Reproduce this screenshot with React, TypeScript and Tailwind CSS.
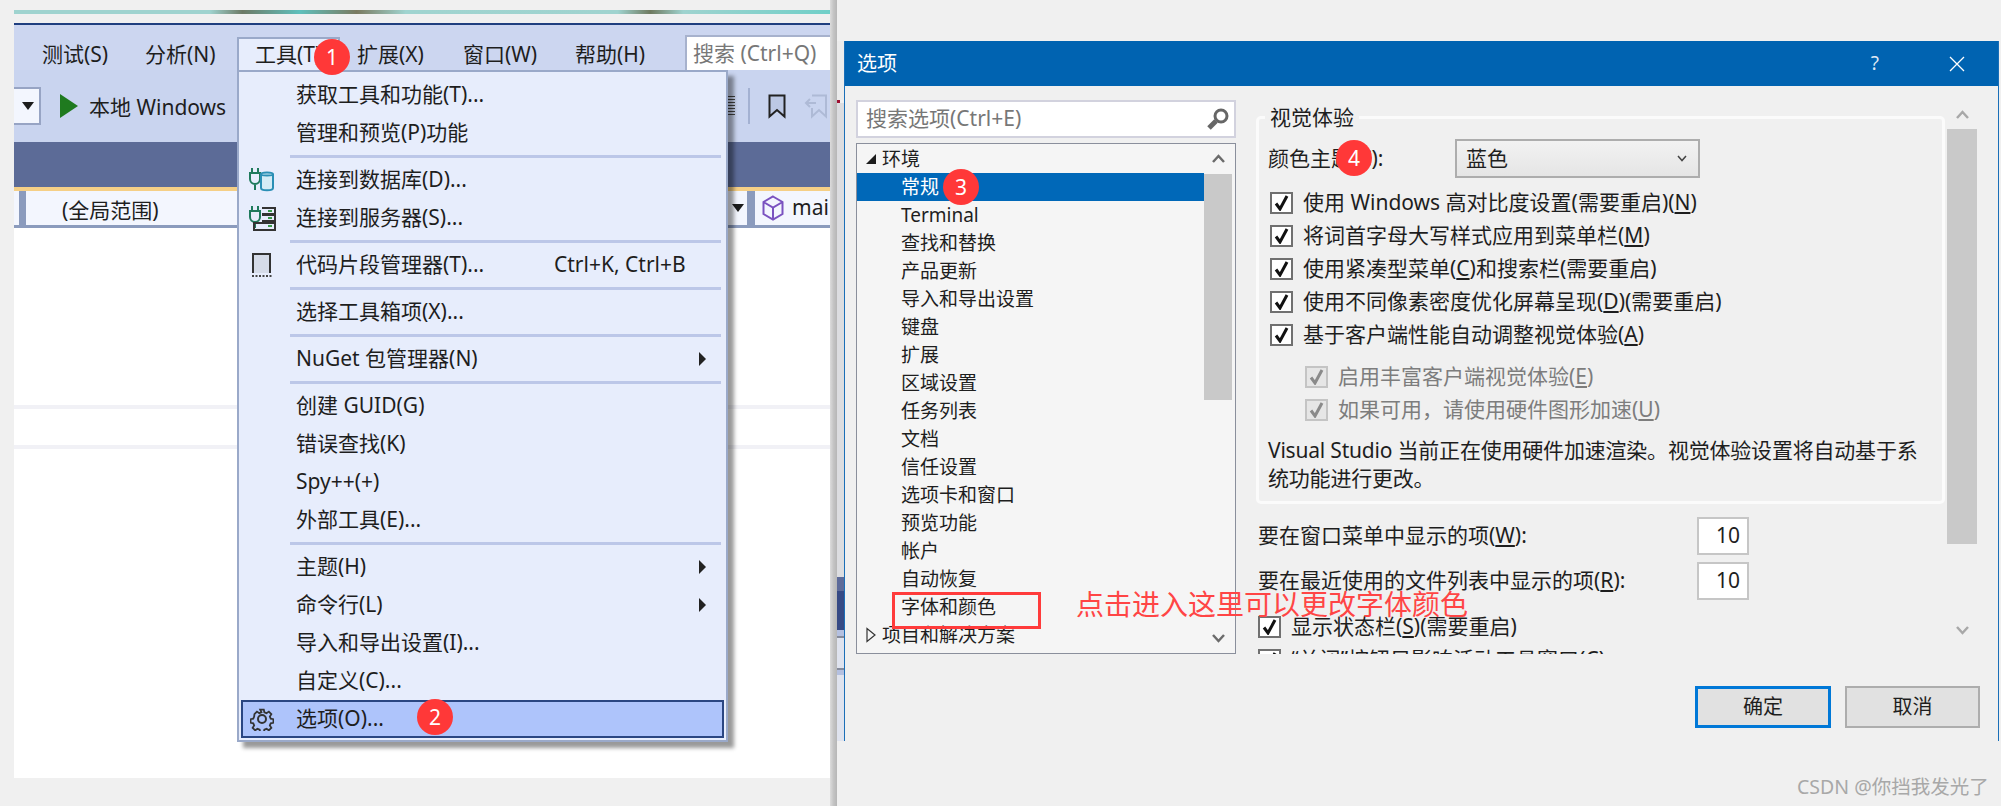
import React from "react";

const Badge = ({ n, className }: { n: number; className: string }) => (
  <div className={"absolute w-[36px] h-[36px] rounded-full bg-[#ff3838] text-white flex items-center justify-center text-[21px] leading-none " + className}>{n}</div>
);

const Caret = () => (
  <svg width="10" height="14" viewBox="0 0 10 14" className="mr-[18px] ml-auto"><path d="M1 0 L8 7 L1 14 Z" fill="#222" /></svg>
);

const Sep = () => (
  <div className="h-[9px] pt-[3px] pl-[51px] pr-[5px]"><div className="h-[3px] bg-[#bcc7e8]" /></div>
);

const DbIcon = () => (
  <svg width="28" height="26" viewBox="0 0 28 26" fill="none">
    <path d="M4 1v5M10 1v5M2 6h10v6a5 5 0 0 1-10 0zM7 17v6" stroke="#1f7a5c" strokeWidth="2" />
    <path d="M13 7c0-2 12-2 12 0v14c0 3-12 3-12 0z" fill="#d4ecf6" stroke="#2a8fb5" strokeWidth="2" />
    <path d="M13 7c0 2 12 2 12 0" stroke="#2a8fb5" strokeWidth="2" />
  </svg>
);
const ServerIcon = () => (
  <svg width="28" height="26" viewBox="0 0 28 26" fill="none">
    <path d="M4 1v5M10 1v5M2 6h10v6a5 5 0 0 1-10 0zM7 17v6" stroke="#1f7a5c" strokeWidth="2" />
    <path d="M14 3h13v6H14M14 10h13v6H14M6 24V18h21v7H6z" stroke="#333" strokeWidth="2" />
    <path d="M20 5h4v2h-4zM20 12h4v2h-4zM20 20h4v2h-4z" fill="#3a9a4a" />
  </svg>
);
const SnippetIcon = () => (
  <svg width="22" height="26" viewBox="0 0 22 26" fill="none">
    <path d="M2 21V2h17v19" fill="#d5dbe8" />
    <path d="M2 21V2h17v19" stroke="#333" strokeWidth="2" />
    <path d="M1 24h20" stroke="#444" strokeWidth="2" strokeDasharray="2 1.5" />
  </svg>
);
const GearIcon = () => (
  <svg width="24" height="24" viewBox="0 0 24 24" fill="none" stroke="#333" strokeWidth="2">
    <path d="M10 1.500h4l.6 3 2.400 1 2.600-1.700 2.800 2.800-1.700 2.600 1 2.400 3 .6v4l-3 .6-1 2.400 1.700 2.600-2.800 2.800-2.600-1.700-2.400 1-.6 3h-4l-.6-3-2.400-1-2.600 1.700-2.800-2.800 1.700-2.600-1-2.400-3-.6v-4l3-.6 1-2.400L3.600 6.600l2.800-2.800 2.600 1.700 2.400-1z" transform="translate(1.200 1.200) scale(.9)" />
    <circle cx="12" cy="12" r="4" />
  </svg>
);

const MenuRow = ({ label, icon, right, arrow, sel }: { label: string; icon?: React.ReactNode; right?: string; arrow?: boolean; sel?: boolean }) => (
  <div className={sel ? "h-[38px] mx-[2px] border-2 border-[#2a4682] bg-[#aec4fb] flex items-center" : "h-[38px] flex items-center"}>
    <div className={sel ? "w-[53px] pl-[7px] flex items-center" : "w-[57px] pl-[9px] flex items-center"}>{icon}</div>
    <span>{label}</span>
    {right && <span className="absolute left-[315px]">{right}</span>}
    {arrow && <Caret />}
  </div>
);

const Menu = () => (
  <div className="absolute left-[237px] top-[70px] w-[491px] h-[672px] border-2 border-[#9aa9c9] bg-[#e7edfc] pt-[4px] text-[21px] text-[#1e1e1e] shadow-[6px_6px_4px_rgba(0,0,0,0.4)]">
    <MenuRow label="获取工具和功能(T)..." />
    <MenuRow label="管理和预览(P)功能" />
    <Sep />
    <MenuRow label="连接到数据库(D)..." icon={<DbIcon />} />
    <MenuRow label="连接到服务器(S)..." icon={<ServerIcon />} />
    <Sep />
    <div className="relative"><MenuRow label="代码片段管理器(T)..." icon={<div className="pl-[3px] flex"><SnippetIcon /></div>} right="Ctrl+K, Ctrl+B" /></div>
    <Sep />
    <MenuRow label="选择工具箱项(X)..." />
    <Sep />
    <MenuRow label="NuGet 包管理器(N)" arrow />
    <Sep />
    <MenuRow label="创建 GUID(G)" />
    <MenuRow label="错误查找(K)" />
    <MenuRow label="Spy++(+)" />
    <MenuRow label="外部工具(E)..." />
    <Sep />
    <MenuRow label="主题(H)" arrow />
    <MenuRow label="命令行(L)" arrow />
    <MenuRow label="导入和导出设置(I)..." />
    <MenuRow label="自定义(C)..." />
    <MenuRow label="选项(O)..." icon={<GearIcon />} sel />
  </div>
);

const DownTri = () => (
  <svg width="12" height="8" viewBox="0 0 12 8"><path d="M0 0h12L6 8z" fill="#1c1c1c" /></svg>
);

const LeftPane = () => (
  <div className="relative w-[830px] shrink-0 pl-[14px] pt-[10px] flex flex-col text-[21px] text-[#1e1e1e]">
    <div className="h-[4px] bg-[linear-gradient(90deg,#9fd3cf_0%,#9fd3cf_24%,#6d7a66_28%,#5fc0bc_35%,#7a7a60_42%,#a0d4d0_48%,#9fd3cf_74%,#6f7a60_78%,#9fd3cf_82%,#70cfc8_100%)]" />
    <div className="h-[9px]" />
    <div className="h-[2px] bg-[#1f3f7f]" />
    <div className="h-[45px] bg-[#ccd6f0] flex">
      <div className="w-[131px] pl-[28px] pt-[12px] leading-[34px]">测试(S)</div>
      <div className="w-[92px] pt-[12px] leading-[34px]">分析(N)</div>
      <div className="w-[103px] mt-[12px] border-t-2 border-x-2 border-[#9aa9c9] bg-[#e7edfc] pl-[16px] leading-[31px]">工具(T)</div>
      <div className="w-[123px] pl-[17px] pt-[12px] leading-[34px]">扩展(X)</div>
      <div className="w-[112px] pt-[12px] leading-[34px]">窗口(W)</div>
      <div className="w-[110px] pt-[12px] leading-[34px]">帮助(H)</div>
      <div className="flex-1 mt-[10px] border-t-2 border-l-2 border-[#a7b2cd] bg-white pl-[6px] text-[#777] leading-[33px] overflow-hidden whitespace-nowrap">搜索 (Ctrl+Q)</div>
    </div>
    <div className="h-[72px] bg-[#c9d4ef] flex items-center">
      <div className="w-[27px] h-[38px] border-y-2 border-r-2 border-[#97a4c4] bg-[#f3f6fe] flex items-center justify-end pr-[5px]"><DownTri /></div>
      <svg width="18" height="24" viewBox="0 0 18 24" className="ml-[19px]"><path d="M0 0 L18 12 L0 24 Z" fill="#1f7a1f" /></svg>
      <span className="ml-[11px] mt-[3px]">本地 Windows</span>
      <div className="ml-auto flex items-center">
        <div className="w-[7px] h-[20px] mr-[13px] bg-[repeating-linear-gradient(180deg,#444_0px,#444_1px,#c9d4ef_1px,#c9d4ef_3px)]" />
        <div className="w-[2px] h-[36px] bg-[#a3b1d2] mr-[18px]" />
        <svg width="18" height="25" viewBox="0 0 18 25" className="mr-[18px]"><path d="M1.500 1.500h15v21L9 16l-7.500 6.500z" fill="#bcc8e4" stroke="#222" strokeWidth="2" /></svg>
        <svg width="24" height="25" viewBox="0 0 24 25" fill="none" stroke="#aebad6" strokeWidth="2" className="mr-[2px]"><path d="M8 1.500h14v21L15 16l-7 6.500V14M12 9H2M6 5 2 9l4 4" /></svg>
      </div>
    </div>
    <div className="h-[45px] bg-[#5c6b97]" />
    <div className="h-[4px] bg-[#f5cf86]" />
    <div className="h-[37px] bg-[#8b9bbd] flex pb-[3px]">
      <div className="w-[5px] bg-[#f3f6fe]" />
      <div className="w-[214px] ml-[7px] bg-[#f3f6fe] pl-[36px] leading-[38px]">(全局范围)</div>
      <div className="ml-auto w-[27px] bg-[#f3f6fe] flex items-center justify-end pr-[3px]"><DownTri /></div>
      <div className="w-[75px] ml-[8px] bg-[#f3f6fe] flex items-center overflow-hidden">
        <svg width="22" height="26" viewBox="0 0 22 26" fill="none" stroke="#7a52c0" strokeWidth="2" className="ml-[7px] shrink-0"><path d="M11 1.500 20.500 7v12L11 24.500 1.500 19V7zM1.500 7 11 12.500 20.500 7M11 12.500v12" /></svg>
        <span className="ml-[8px]">mai</span>
      </div>
    </div>
    <div className="h-[550px] bg-white pt-[177px]">
      <div className="h-[4px] bg-[#f1f1f6]" />
      <div className="h-[36px]" />
      <div className="h-[4px] bg-[#f1f1f6]" />
    </div>
    <Menu />
    <Badge n={1} className="left-[314px] top-[39px]" />
    <Badge n={2} className="left-[417px] top-[699px]" />
  </div>
);

const Seam = () => (
  <div className="flex shrink-0">
    <div className="w-[7px] bg-[linear-gradient(90deg,#dcdcdc,#c4c4c4,#b6b6b6)]" />
    <div className="w-[7px] pt-[41px] flex flex-col h-[741px]">
      <div className="h-[59px] bg-[#ececec]" />
      <div className="h-[3px] w-[3px] bg-[#a01030]" />
      <div className="h-[474px] bg-[#dcdde0]" />
      <div className="h-[14px] bg-[#5d6b9a]" />
      <div className="h-[39px] bg-[#364a85]" />
      <div className="h-[6px] bg-[#b4c0e0]" />
      <div className="h-[2px] bg-[#858b9c]" />
      <div className="h-[30px] bg-[#dfe3ee]" />
      <div className="h-[2px] bg-[#858b9c]" />
      <div className="h-[5px] bg-[#b4c0e0]" />
      <div className="flex-1 bg-[#dfe3ee]" />
    </div>
  </div>
);

const Chev = ({ up, color = "#6b6b6b" }: { up?: boolean; color?: string }) => (
  <svg width="13" height="9" viewBox="0 0 13 9" fill="none" stroke={color} strokeWidth="2.500">
    <path d={up ? "M1 8 6.500 2 12 8" : "M1 1 6.500 7 12 1"} />
  </svg>
);

const tree = ["Terminal", "查找和替换", "产品更新", "导入和导出设置", "键盘", "扩展", "区域设置", "任务列表", "文档", "信任设置", "选项卡和窗口", "预览功能", "帐户", "自动恢复", "字体和颜色"];

const TreePane = () => (
  <div className="w-[380px] ml-[11px] mt-[1px] flex flex-col">
    <div className="h-[38px] border-2 border-[#d2d2de] bg-white flex items-center pl-[8px] text-[#777] text-[21px]">
      <span>搜索选项(Ctrl+E)</span>
      <svg width="24" height="24" viewBox="0 0 24 24" fill="none" stroke="#666" className="ml-auto mr-[4px]">
        <circle cx="15" cy="9" r="6" strokeWidth="3" />
        <path d="M10 14 3 21" strokeWidth="5" />
      </svg>
    </div>
    <div className="mt-[5px] h-[512px] border border-[#8a8f9c] bg-[#f5f5f5] flex text-[19px] text-[#1e1e1e]">
      <div className="w-[347px] pt-[1px] overflow-hidden">
        <div className="h-[28px] flex items-center pl-[8px]">
          <svg width="12" height="12" viewBox="0 0 12 12" className="shrink-0"><path d="M11 1v10H1z" fill="#1c1c1c" /></svg>
          <span className="ml-[5px]">环境</span>
        </div>
        <div className="h-[28px] flex items-center pl-[44px] bg-[#0068b8] text-white">常规</div>
        {tree.map((t) => (
          <div key={t} className="h-[28px] flex items-center pl-[44px]">{t}</div>
        ))}
        <div className="h-[28px] flex items-center pl-[8px]">
          <svg width="12" height="16" viewBox="0 0 12 16" fill="none" stroke="#333" strokeWidth="1.200" className="shrink-0"><path d="M2 1.500v13L10 8z" /></svg>
          <span className="ml-[5px]">项目和解决方案</span>
        </div>
      </div>
      <div className="w-[30px] flex flex-col items-center pr-[2px]">
        <div className="h-[30px] flex items-center justify-center"><Chev up /></div>
        <div className="w-[28px] h-[226px] bg-[#c9c9c9]" />
        <div className="mt-auto h-[30px] flex items-center justify-center"><Chev /></div>
      </div>
    </div>
  </div>
);

const Check = ({ off }: { off?: boolean }) => (
  <div className={off ? "w-[23px] h-[22px] shrink-0 border-2 border-[#c4c4c4] bg-[#e6e6e6] flex items-center justify-center" : "w-[23px] h-[22px] shrink-0 border-2 border-[#707070] bg-white flex items-center justify-center"}>
    <svg width="15" height="16" viewBox="0 0 15 16" fill="none" stroke={off ? "#8a8a8a" : "#111"} strokeWidth="3"><path d="M2 8.500 6 14 13 1" /></svg>
  </div>
);

const CheckRow = ({ children, off, className = "" }: { children: React.ReactNode; off?: boolean; className?: string }) => (
  <div className={"h-[33px] flex items-center whitespace-nowrap " + className + (off ? " text-[#7d7d7d]" : "")}>
    <Check off={off} />
    <span className="ml-[10px]">{children}</span>
  </div>
);

const NumBox = () => (
  <div className="w-[52px] h-[38px] border-2 border-[#c6c6c6] bg-white flex items-center justify-end pr-[7px] text-[21px]">10</div>
);

const RightPane = () => (
  <div className="flex ml-[20px] h-[555px] text-[21px] text-[#1e1e1e]">
    <div className="w-[691px] h-[555px] overflow-hidden pt-[17px]">
      <div className="relative w-[689px] h-[388px] border-[3px] border-[#fbfbfb] rounded-[5px] pl-[9px] pt-[20px]">
        <div className="absolute left-[6px] top-[-16px] h-[28px] leading-[28px] px-[5px] bg-[#f0f0f0]">视觉体验</div>
        <div className="h-[39px] flex items-center">
          <span className="w-[187px]">颜色主题(C):</span>
          <div className="w-[245px] h-[39px] border-2 border-[#adadad] bg-[linear-gradient(180deg,#f2f2f2,#e5e5e5)] flex items-center pl-[9px]">
            <span>蓝色</span>
            <svg width="10" height="7" viewBox="0 0 10 7" fill="none" stroke="#444" strokeWidth="1.500" className="ml-auto mr-[11px]"><path d="M1 1l4 4.500L9 1" /></svg>
          </div>
        </div>
        <div className="mt-[8px] pl-[2px]">
          <CheckRow>使用 Windows 高对比度设置(需要重启)(<u>N</u>)</CheckRow>
          <CheckRow>将词首字母大写样式应用到菜单栏(<u>M</u>)</CheckRow>
          <CheckRow>使用紧凑型菜单(<u>C</u>)和搜索栏(需要重启)</CheckRow>
          <CheckRow>使用不同像素密度优化屏幕呈现(<u>D</u>)(需要重启)</CheckRow>
          <CheckRow>基于客户端性能自动调整视觉体验(<u>A</u>)</CheckRow>
        </div>
        <div className="mt-[9px] pl-[37px]">
          <CheckRow off>启用丰富客户端视觉体验(<u>E</u>)</CheckRow>
          <CheckRow off>如果可用，请使用硬件图形加速(<u>U</u>)</CheckRow>
        </div>
        <p className="mt-[10px] leading-[28px] w-[668px] tracking-[-0.2px]">Visual Studio 当前正在使用硬件加速渲染。视觉体验设置将自动基于系统功能进行更改。</p>
      </div>
      <div className="mt-[13px] pl-[2px]">
        <div className="flex items-center"><span className="w-[439px]">要在窗口菜单中显示的项(<u>W</u>):</span><NumBox /></div>
        <div className="mt-[7px] flex items-center"><span className="w-[439px]">要在最近使用的文件列表中显示的项(<u>R</u>):</span><NumBox /></div>
        <CheckRow className="mt-[10px]">显示状态栏(<u>S</u>)(需要重启)</CheckRow>
        <CheckRow>“关闭”按钮只影响活动工具窗口(<u>C</u>)</CheckRow>
      </div>
    </div>
    <div className="w-[30px] flex flex-col items-center">
      <div className="h-[30px] flex items-center justify-center"><Chev up color="#a8a8a8" /></div>
      <div className="w-[30px] h-[415px] bg-[#c9c9c9]" />
      <div className="mt-auto h-[28px] flex items-start justify-center"><Chev color="#a8a8a8" /></div>
    </div>
  </div>
);

const Dialog = () => (
  <div className="w-[1155px] h-[700px] mt-[41px] border-x border-[#1a6fb8] flex flex-col bg-[#f0f0f0]">
    <div className="h-[45px] shrink-0 bg-[#0063b1] flex items-center text-white pl-[12px] text-[20px]">
      <span>选项</span>
      <span className="ml-auto text-[19px] text-[#dfe8f4]">?</span>
      <svg width="16" height="16" viewBox="0 0 16 16" fill="none" stroke="#fff" strokeWidth="1.300" className="ml-[70px] mr-[33px]"><path d="M1 1l14 14M15 1 1 15" /></svg>
    </div>
    <div className="flex pt-[13px] h-[568px]">
      <TreePane />
      <RightPane />
    </div>
    <div className="mt-[32px] flex justify-end pr-[18px] text-[20px] text-[#1e1e1e]">
      <div className="w-[136px] h-[42px] border-[3px] border-[#0078d7] bg-[#e1e1e1] flex items-center justify-center">确定</div>
      <div className="w-[135px] h-[42px] ml-[14px] border-2 border-[#adadad] bg-[#e1e1e1] flex items-center justify-center">取消</div>
    </div>
  </div>
);

export default function App() {
  return (
    <div className="relative w-[2001px] h-[806px] overflow-hidden bg-[#f0f0f0] flex font-['Noto_Sans','Noto_Sans_CJK_SC',sans-serif]">
      <LeftPane />
      <Seam />
      <Dialog />
      <Badge n={3} className="left-[943px] top-[169px]" />
      <Badge n={4} className="left-[1336px] top-[140px]" />
      <div className="absolute left-[892px] top-[592px] w-[149px] h-[37px] border-[3px] border-[#ff3b3b]" />
      <div className="absolute left-[1076px] top-[586px] text-[28px] leading-[36px] text-[#ff4545] whitespace-nowrap">点击进入这里可以更改字体颜色</div>
      <div className="absolute left-[1797px] top-[774px] text-[19.500px] leading-[26px] text-[#a8a8a8] whitespace-nowrap">CSDN @你挡我发光了</div>
    </div>
  );
}
